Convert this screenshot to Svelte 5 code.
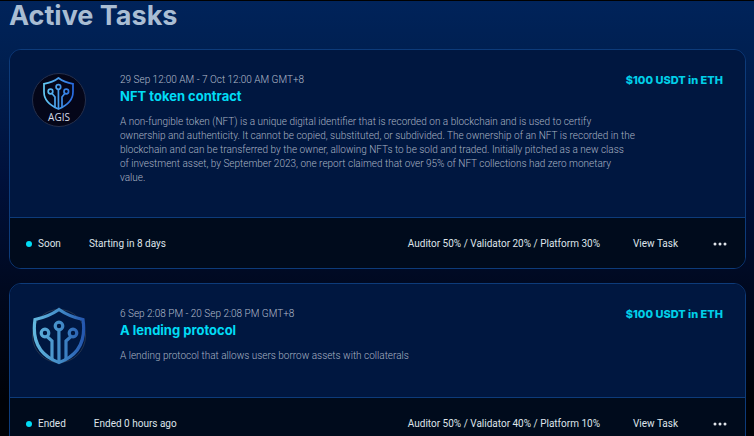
<script>
  const tasks = [
    {
      logo: 'badge',
      period: '29 Sep 12:00 AM - 7 Oct 12:00 AM GMT+8',
      title: 'NFT token contract',
      description:
        'A non-fungible token (NFT) is a unique digital identifier that is recorded on a blockchain and is used to certify ownership and authenticity. It cannot be copied, substituted, or subdivided. The ownership of an NFT is recorded in the blockchain and can be transferred by the owner, allowing NFTs to be sold and traded. Initially pitched as a new class of\u00a0investment asset, by September 2023, one report claimed that over 95% of NFT collections had zero monetary value.',
      reward: '$100 USDT in ETH',
      status: 'Soon',
      timing: 'Starting in 8 days',
      split: 'Auditor 50% / Validator 20% / Platform 30%'
    },
    {
      logo: 'shield',
      period: '6 Sep 2:08 PM - 20 Sep 2:08 PM GMT+8',
      title: 'A lending protocol',
      description: 'A lending protocol that allows users borrow assets with collaterals',
      reward: '$100 USDT in ETH',
      status: 'Ended',
      timing: 'Ended 0 hours ago',
      split: 'Auditor 50% / Validator 40% / Platform 10%'
    }
  ];
</script>

<main>
  <h1>Active Tasks</h1>

  {#each tasks as task}
    <article class="card">
      <div class="body">
        {#if task.logo === 'badge'}
          <svg class="logo" viewBox="0 0 54 54" role="img" aria-label="AGIS">
            <defs>
              <linearGradient id="badge-stroke" gradientUnits="userSpaceOnUse" x1="11" y1="0" x2="42" y2="0">
                <stop offset="0" stop-color="#66cdf5" />
                <stop offset="1" stop-color="#2668e0" />
              </linearGradient>
            </defs>
            <circle cx="27" cy="27" r="26.5" fill="#040619" stroke="#25304c" />
            <g fill="none" stroke="url(#badge-stroke)" stroke-width="1.7">
              <path d="M26.5 5 C22 8.5 17 10 12 10.8 V19 C12 27 18 32.5 26.5 36 C35 32.5 41 27 41 19 V10.8 C36 10 31 8.5 26.5 5 Z" />
              <circle cx="18.5" cy="18.5" r="2.3" />
              <circle cx="26.4" cy="14" r="2.3" />
              <circle cx="34.3" cy="18.5" r="2.3" />
              <path d="M20 20.5 L23 24 V34 M26.4 16.3 L26.5 35.5 M32.8 20.5 L30 24 V34" />
            </g>
            <text x="27" y="48" text-anchor="middle">AGIS</text>
          </svg>
        {:else}
          <svg class="logo" viewBox="0 0 54 58" role="img" aria-label="Shield">
            <defs>
              <linearGradient id="shield-stroke" gradientUnits="userSpaceOnUse" x1="1" y1="0" x2="53" y2="0">
                <stop offset="0" stop-color="#64b9df" />
                <stop offset="0.55" stop-color="#4189c6" />
                <stop offset="1" stop-color="#2354ad" />
              </linearGradient>
            </defs>
            <circle cx="27" cy="29" r="26.5" fill="none" stroke="#26364f" />
            <g fill="none" stroke="url(#shield-stroke)" stroke-width="3.2">
              <path d="M27 2.5 C19 8 11 11 3 12.5 C0 33 6 48 27 55.5 C48 48 54 33 51 12.5 C43 11 35 8 27 2.5 Z" />
              <circle cx="13" cy="26" r="3.8" />
              <circle cx="27" cy="19" r="3.8" />
              <circle cx="41" cy="26" r="3.8" />
              <path d="M15 29.5 L20 34 V52 M26.9 23 L27 56 M39 29.5 L34 34 V52" />
            </g>
          </svg>
        {/if}

        <div class="details">
          <header>
            <div>
              <p class="period">{task.period}</p>
              <h2>{task.title}</h2>
            </div>
            <strong class="reward">{task.reward}</strong>
          </header>
          <p class="description">{task.description}</p>
        </div>
      </div>

      <footer>
        <span class="status">{task.status}</span>
        <span>{task.timing}</span>
        <span class="split">{task.split}</span>
        <a href="#task">View Task</a>
        <button type="button" aria-label="More options">
          <svg viewBox="0 0 14 4" width="14" height="4" fill="currentColor">
            <circle cx="2" cy="2" r="1.5" />
            <circle cx="7" cy="2" r="1.5" />
            <circle cx="12" cy="2" r="1.5" />
          </svg>
        </button>
      </footer>
    </article>
  {/each}
</main>

<style>
  :global(body) {
    margin: 0;
    background: #000207;
  }

  main {
    box-sizing: border-box;
    padding: 0 8px 0 9px;
    border-top: 1px solid #000;
    background: linear-gradient(#00235a 0, #001f50 60px, #00103a 180px, #000a24 270px, #000207 400px);
    font-family: Roboto, "Liberation Sans", sans-serif;
    font-size: 10px;
    line-height: 14px;
    color: #dfe4ea;
  }

  h1,
  h2,
  .reward {
    font-family: Inter, "Liberation Sans", sans-serif;
    font-weight: 700;
  }

  h1 {
    margin: 0;
    padding-bottom: 18px;
    font-size: 27px;
    line-height: 30px;
    color: #a9bdd3;
  }

  .card {
    margin-bottom: 14px;
    border: 1px solid #0d3b7a;
    border-radius: 12px;
    overflow: hidden;
  }

  .body {
    display: flex;
    align-items: flex-start;
    padding: 23px 22px 32px;
    background: #001740;
  }

  .logo {
    flex: none;
    width: 54px;
    margin-right: 34px;
  }

  .logo text {
    font-family: "Open Sans", sans-serif;
    font-size: 10px;
    fill: #d5dbe8;
  }

  .details {
    flex: 1;
    min-width: 0;
  }

  header {
    display: flex;
    justify-content: space-between;
    align-items: flex-start;
    margin-bottom: 10px;
  }

  p {
    margin: 0;
  }

  .period {
    font-weight: 300;
    color: #b3bccb;
  }

  h2 {
    margin: 0;
    font-size: 13px;
    line-height: 18px;
    color: #00dcf5;
  }

  .description {
    max-width: 517px;
    font-weight: 300;
    color: #a8b2c3;
  }

  .reward {
    font-size: 11px;
    font-weight: 800;
    white-space: nowrap;
    color: #00cfe8;
  }

  footer {
    display: flex;
    align-items: center;
    min-height: 49px;
    padding: 1px 18px 0 16px;
    border-top: 1px solid #0d3b7a;
    background: #000b1c;
  }

  .status {
    display: flex;
    align-items: center;
    gap: 6px;
    margin-right: 28px;
  }

  .status::before {
    content: "";
    width: 6px;
    height: 6px;
    border-radius: 50%;
    background: #00dcf5;
  }

  .split {
    margin-left: auto;
  }

  a {
    margin: 0 35px 0 33px;
    color: inherit;
    text-decoration: none;
  }

  button {
    display: flex;
    padding: 0;
    border: 0;
    background: none;
    color: inherit;
    cursor: pointer;
  }
</style>
